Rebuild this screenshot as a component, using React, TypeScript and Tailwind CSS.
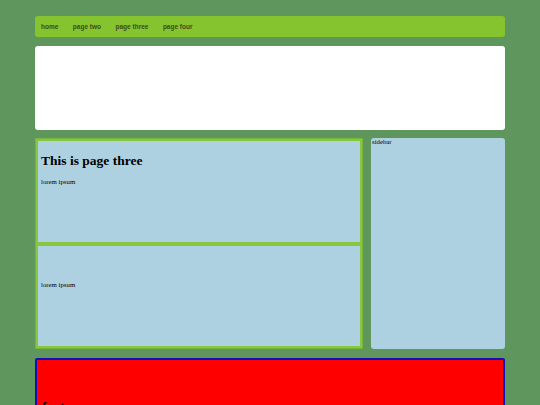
import React from "react";

const links = ["home", "page two", "page three", "page four"];

export default function App() {
  return (
    <div className="min-h-screen bg-[#5f965e] px-[35px] pt-4 pb-6 font-['Liberation_Serif',serif] text-black">
      {/* nav */}
      <nav className="flex h-[21px] items-center gap-[14.5px] rounded-[3px] bg-[#86c42f] pl-[6px] font-['Liberation_Sans',Arial,sans-serif] text-[6.5px] font-bold text-[#3d4d17]">
        {links.map((l) => (
          <a key={l} href="#">
            {l}
          </a>
        ))}
      </nav>

      {/* banner */}
      <div className="mt-[9px] h-[84px] rounded-[3px] bg-white"></div>

      {/* content row */}
      <div className="mt-2 flex h-[211px] gap-2">
        <main className="flex w-[328px] flex-col border border-[#74b53a]">
          <article className="h-[105px] border-2 border-[#88c640] bg-[#add1e0] pl-[3px] pt-3">
            <h2 className="text-[13.5px] font-bold leading-4">This is page three</h2>
            <p className="mt-[9px] text-[6.8px] leading-2">lorem ipsum</p>
          </article>
          <article className="flex-1 border-2 border-[#88c640] bg-[#add1e0] pl-[3px] pt-[35px]">
            <p className="text-[6.8px] leading-2">lorem ipsum</p>
          </article>
        </main>
        <aside className="flex-1 rounded-[3px] bg-[#add1e0] pl-px text-[6.8px] leading-2">
          sidebar
        </aside>
      </div>

      {/* footer */}
      <footer className="mt-[9px] h-[80px] rounded-[2px] border-2 border-[#1010c0] bg-[#ff0000] pl-[5px] pt-[39px]">
        <h2 className="text-[13.5px] font-bold leading-4">footer</h2>
      </footer>
    </div>
  );
}
